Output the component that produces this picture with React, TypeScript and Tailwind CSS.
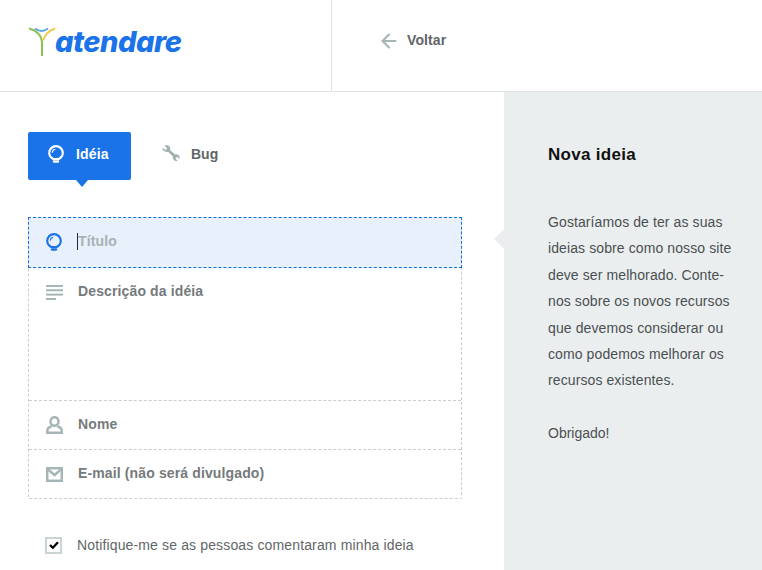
import type { ReactNode } from "react";
import { ArrowLeft } from "lucide-react";

function BulbIcon({ className }: { className?: string }) {
  return (
    <svg viewBox="0 0 15 17" fill="none" stroke="currentColor" className={className}>
      <path d="M5 13.200C2.600 12 1.100 10 1.100 7.500 1.100 3.900 4 1.100 7.500 1.100s6.400 2.800 6.400 6.400c0 2.500-1.500 4.500-3.900 5.700z" strokeWidth="2" />
      <path d="M5.500 15.600h4" strokeWidth="2.200" strokeLinecap="round" />
      <path d="M4 7.300c0-1.700 1.200-3 2.800-3.300" strokeWidth="1" />
    </svg>
  );
}

function WrenchIcon() {
  return (
    <svg viewBox="0 0 18 18" className="h-[18px] w-[18px] text-[#a0b0b0]" fill="currentColor">
      <path d="M.6 2.800 3.400 5.300 5.200 3.600 2.500.6C4.300-.3 6.300.2 7.400 1.500c.8 1 1 2.300.6 3.400l5 4.700c1.200-.5 2.600-.3 3.600.7 1 1 1.300 2.400.8 3.600l-2.300-2.100-1.700 1.700 2.200 2.300c-1.400.5-2.800.2-3.800-.8-.9-1-1.200-2.300-.8-3.500l-5-4.700c-1.200.4-2.600.2-3.600-.8C.6 5.900.2 4.200.6 2.800z" />
    </svg>
  );
}

function LinesIcon() {
  return (
    <svg viewBox="0 0 17 15" className="h-[15px] w-[17px] text-[#a6b5b5]" fill="currentColor">
      <rect width="17" height="2" y="0" />
      <rect width="17" height="2" y="4.300" />
      <rect width="17" height="2" y="8.600" />
      <rect width="10" height="2" y="13" />
    </svg>
  );
}

function PersonIcon() {
  return (
    <svg viewBox="0 0 17 18" fill="none" stroke="currentColor" strokeWidth="2.500" className="h-[18px] w-[17px] text-[#a6b5b5]">
      <ellipse cx="8.500" cy="5.500" rx="4" ry="4.300" />
      <path d="M5.500 10.500C3 11.200 1.300 12.400 1.300 14.500v2.200h14.400v-2.200c0-2.100-1.700-3.300-4.200-4" />
    </svg>
  );
}

function MailIcon() {
  return (
    <svg viewBox="0 0 17 15" fill="none" stroke="currentColor" strokeWidth="2.500" className="h-[15px] w-[17px] text-[#a6b5b5]">
      <rect x="1.200" y="1.200" width="14.600" height="12.600" />
      <path d="M1.500 2l7 6 7-6" />
    </svg>
  );
}

function Row({ icon, label, height, focused, border }: { icon: ReactNode; label: string; height: string; focused?: boolean; border?: boolean }) {
  return (
    <div
      className={`flex items-start pl-[17px] ${height} ${border ? "border-b border-dashed border-[#c6cfcf]" : ""} ${
        focused ? "bg-[#e8f0fb] -mx-px -mt-px border border-dashed border-[#1a6dd8]" : ""
      }`}
    >
      <div className="flex h-[48px] w-[32px] shrink-0 items-center">{icon}</div>
      <div className={`flex h-[46px] items-center text-sm font-bold tracking-[0.13px] ${focused ? "text-[#a9b1b5]" : "text-[#757a7c]"}`}>
        {focused && <span className="-ml-px h-[17px] w-px bg-[#1f2937]" />}
        {label}
      </div>
    </div>
  );
}

export default function App() {
  return (
    <div className="flex h-[570px] w-[762px] flex-col overflow-hidden bg-white font-['Liberation_Sans',Arial,sans-serif]">
      <header className="flex h-[92px] shrink-0 border-b border-[#dde3e3]">
        <div className="flex w-[332px] shrink-0 items-center border-r border-[#dde3e3] pb-[8px] pl-[28px]">
          <svg viewBox="0 0 28 30" fill="none" strokeWidth="2" className="h-[30px] w-[28px] shrink-0">
            <path d="M1 1.500c7 1.500 12.500 6.500 13 14V29" stroke="#8cc152" />
            <path d="M7 1.500c4 3 9 3 13 0" stroke="#5aa9e6" />
            <path d="M27 1.500c-6 2-10 6-12 12" stroke="#f2c94c" />
          </svg>
          <span className="-ml-px font-['Inter',sans-serif] text-[29px] font-extrabold italic leading-none tracking-[-0.5px] text-[#1a73e8]">atendare</span>
        </div>
        <div className="flex items-center pb-[10px] pl-[46px]">
          <ArrowLeft className="h-[22px] w-[22px] text-[#a6b5b5]" strokeWidth={2.400} />
          <span className="ml-[7px] -mt-[2px] text-sm font-bold tracking-[0.1px] text-[#5f6668]">Voltar</span>
        </div>
      </header>

      <div className="flex min-h-0 flex-1">
        <main className="w-[504px] shrink-0 pl-[28px] pr-[42px] pt-[40px]">
          <div className="flex items-center">
            <div className="relative flex h-[48px] w-[103px] items-center rounded-[2px] bg-[#1a73e8] pb-[4px] pl-[20px] text-white">
              <BulbIcon className="h-[18px] w-[16px]" />
              <span className="ml-[12px] text-sm font-bold tracking-[0.15px]">Idéia</span>
              <span className="absolute left-[48px] top-[48px] h-0 w-0 border-x-[6px] border-t-[7px] border-x-transparent border-t-[#1a73e8]" />
            </div>
            <div className="ml-[31px] flex items-center pb-[5px]">
              <WrenchIcon />
              <span className="ml-[11px] text-sm font-bold text-[#5f6668]">Bug</span>
            </div>
          </div>

          <form className="mt-[37px] h-[282px] w-[434px] rounded-[2px] border border-dashed border-[#c6cfcf]">
            <Row focused height="h-[51px]" label="Título" icon={<BulbIcon className="h-[18px] w-[16px] text-[#1a73e8]" />} />
            <Row border height="h-[133px]" label="Descrição da idéia" icon={<LinesIcon />} />
            <Row border height="h-[49px]" label="Nome" icon={<PersonIcon />} />
            <Row height="h-[48px]" label="E-mail (não será divulgado)" icon={<MailIcon />} />
          </form>

          <label className="mt-[36px] flex items-center pl-[17px] text-sm tracking-[0.14px] text-[#5f6668]">
            <span className="flex h-[17px] w-[17px] items-center justify-center border-2 border-[#c9d5d5] bg-white">
              <svg viewBox="0 0 10 8" className="h-[8px] w-[10px]" fill="none" stroke="#000" strokeWidth="2.200">
                <path d="M1 4l2.800 2.800L9 1.200" />
              </svg>
            </span>
            <span className="ml-[15px]">Notifique-me se as pessoas comentaram minha ideia</span>
          </label>
        </main>

        <aside className="relative flex-1 bg-[#ebeeef] pl-[44px] pr-[24px] pt-[53px] text-[#4a5052]">
          <span className="absolute -left-[10px] top-[137px] h-0 w-0 border-y-[10px] border-r-[10px] border-y-transparent border-r-[#ebeeef]" />
          <h2 className="text-[17px] font-bold leading-[20px] tracking-[0.3px] text-[#111]">Nova ideia</h2>
          <p className="mt-[44px] text-sm leading-[26.4px] tracking-[0.1px]">
            Gostaríamos de ter as suas ideias sobre como nosso site deve ser melhorado. Conte-nos sobre os novos recursos que devemos considerar ou como podemos melhorar os recursos existentes.
          </p>
          <p className="mt-[26px] text-sm leading-[26.4px]">Obrigado!</p>
        </aside>
      </div>
    </div>
  );
}
